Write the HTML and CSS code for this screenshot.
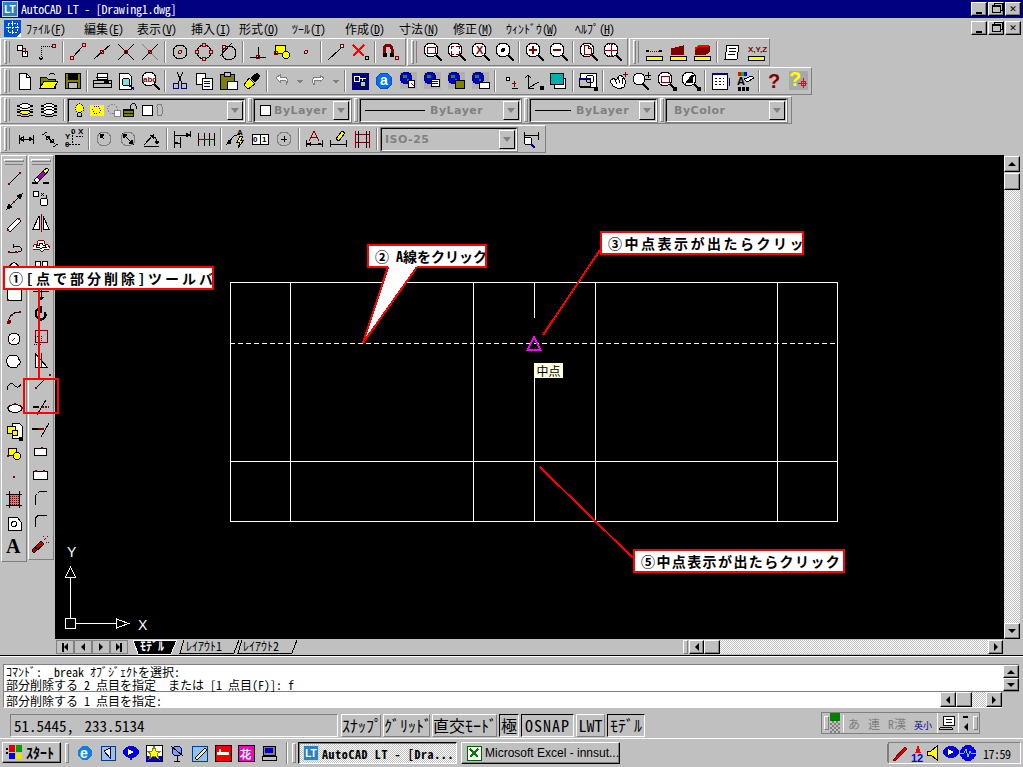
FILE: index.html
```html
<!DOCTYPE html>
<html lang="ja">
<head>
    <meta charset="UTF-8">
    <title>AutoCAD LT - [Drawing1.dwg]</title>
    <link rel="stylesheet" href="styles.css">
</head>
<body>

    <svg class="defs" width="0" height="0">
        <symbol id="mag" viewBox="0 0 24 24"><circle class="w" cx="11" cy="10" r="7"/><path class="b" d="M16 15l6 6"/></symbol>
        <symbol id="ruler" viewBox="0 0 24 24"><rect class="y" x="4" y="16" width="16" height="4"/><path d="M4 20h16"/></symbol>
        <symbol id="earth" viewBox="0 0 24 24"><circle cx="10" cy="9" r="6" fill="#0000c0" stroke="#000080"/><path class="gr" d="M7 6h4v3h-4zM11 10h2v2h-2z"/></symbol>
    </svg>

    <div class="titlebar">
        <span class="app-logo">LT</span>
        <span class="title-text">AutoCAD LT - [Drawing1.dwg]</span>
        <div class="winbtns">
            <span class="winbtn"><i class="min"></i></span>
            <span class="winbtn"><i class="rest"></i></span>
            <span class="winbtn x">&#10005;</span>
        </div>
    </div>

    <div class="menubar">
        <svg class="doc-logo" viewBox="0 0 17 17"><rect width="17" height="17" fill="#0050e0"/><path d="M4 3h9v9h-9zM8 1v13M2 7h13" stroke="#fff" stroke-dasharray="2 1" fill="none"/><path d="M12 17l5-5v5z" fill="#fff"/></svg>
        <div class="menus">
            <span>ﾌｧｲﾙ<b>(<u>F</u>)</b></span>
            <span>編集<b>(<u>E</u>)</b></span>
            <span>表示<b>(<u>V</u>)</b></span>
            <span>挿入<b>(<u>I</u>)</b></span>
            <span>形式<b>(<u>O</u>)</b></span>
            <span>ﾂｰﾙ<b>(<u>T</u>)</b></span>
            <span>作成<b>(<u>D</u>)</b></span>
            <span>寸法<b>(<u>N</u>)</b></span>
            <span>修正<b>(<u>M</u>)</b></span>
            <span>ｳｨﾝﾄﾞｳ<b>(<u>W</u>)</b></span>
            <span>ﾍﾙﾌﾟ<b>(<u>H</u>)</b></span>
        </div>
        <div class="winbtns">
            <span class="winbtn"><i class="min"></i></span>
            <span class="winbtn"><i class="rest"></i></span>
            <span class="winbtn x">&#10005;</span>
        </div>
    </div>

    <!-- object snap / zoom / inquiry -->
    <div class="toolrow">
        <div class="toolbar tb-snap">
            <i class="handle"></i>
            <svg class="i" viewBox="0 0 24 24"><circle class="w" cx="8" cy="8" r="3"/><circle class="w" cx="13" cy="14" r="3"/><path class="m" d="M13 14v-5M11 8h3"/></svg>
            <svg class="i" viewBox="0 0 24 24"><path stroke-dasharray="1 1" d="M5 6h11M5 6v13"/><path d="M3 17l2 3 2-3"/><circle class="m" cx="18" cy="6" r="2"/></svg>
            <i class="sep"></i>
            <svg class="i" viewBox="0 0 24 24"><path d="M7 17L17 6"/><circle class="m" cx="6" cy="18" r="2"/><circle class="m" cx="18" cy="5" r="2"/></svg>
            <svg class="i" viewBox="0 0 24 24"><path d="M4 19L20 5"/><circle class="m" cx="12" cy="12" r="2"/></svg>
            <svg class="i" viewBox="0 0 24 24"><path d="M4 4l16 16M20 4L4 20"/><circle class="m" cx="12" cy="12" r="2"/></svg>
            <svg class="i" viewBox="0 0 24 24"><path class="g" d="M4 4l16 16"/><path d="M20 4L4 20"/><circle class="m" cx="12" cy="12" r="2"/></svg>
            <i class="sep"></i>
            <svg class="i" viewBox="0 0 24 24"><circle cx="12" cy="12" r="7"/><circle class="m" cx="12" cy="12" r="1.5"/></svg>
            <svg class="i" viewBox="0 0 24 24"><circle cx="12" cy="12" r="7"/><circle class="m gb" cx="12" cy="5" r="2"/><circle class="m gb" cx="12" cy="19" r="2"/><circle class="m gb" cx="5" cy="12" r="2"/><circle class="m gb" cx="19" cy="12" r="2"/></svg>
            <svg class="i" viewBox="0 0 24 24"><circle cx="13" cy="13" r="7"/><path d="M4 16L16 3"/><circle class="m gb" cx="8" cy="7" r="2"/></svg>
            <i class="sep"></i>
            <svg class="i" viewBox="0 0 24 24"><path d="M4 17h16M12 7v10"/><circle class="m" cx="12" cy="17" r="2"/></svg>
            <svg class="i" viewBox="0 0 24 24"><rect class="y" x="5" y="5" width="10" height="8"/><circle class="y" cx="16" cy="15" r="3.5"/><circle class="m" cx="6" cy="13" r="2"/></svg>
            <svg class="i" viewBox="0 0 24 24"><circle class="m" cx="12" cy="12" r="1.5"/></svg>
            <i class="sep"></i>
            <svg class="i" viewBox="0 0 24 24"><path d="M4 20L16 9"/><path d="M16 9l2-2"/><circle class="m w" cx="18" cy="6" r="2"/></svg>
            <svg class="i" viewBox="0 0 24 24"><path class="red b" d="M5 5l11 11M16 5L5 16"/><circle cx="19" cy="18" r="2"/></svg>
            <i class="sep"></i>
            <svg class="i" viewBox="0 0 24 24"><path class="m th" d="M6 15V9a4 4 0 0 1 8 0v6"/><path class="k" d="M5 13h3v3h-3zM12 13h3v3h-3z"/><circle class="m" cx="19" cy="18" r="2"/></svg>
        </div>
        <div class="toolbar tb-zoom">
            <i class="handle"></i>
            <svg class="i" viewBox="0 0 24 24"><use href="#mag"/><rect class="m" x="7" y="7" width="8" height="6"/></svg>
            <svg class="i" viewBox="0 0 24 24"><use href="#mag"/><path class="m" d="M7 9V6h3M12 6h3v3M7 11v3h3M15 11v3h-3"/></svg>
            <svg class="i" viewBox="0 0 24 24"><use href="#mag"/><text class="t m-t" x="8" y="14">X</text></svg>
            <svg class="i" viewBox="0 0 24 24"><use href="#mag"/><circle class="k" cx="11" cy="10" r="1.5"/></svg>
            <i class="sep"></i>
            <svg class="i" viewBox="0 0 24 24"><use href="#mag"/><path class="m b" d="M7 10h8M11 6v8"/></svg>
            <svg class="i" viewBox="0 0 24 24"><use href="#mag"/><path class="m b" d="M7 10h8"/></svg>
            <i class="sep"></i>
            <svg class="i" viewBox="0 0 24 24"><use href="#mag"/><path class="m" d="M8 5h4l3 3v6H8zM12 5v3h3"/></svg>
            <svg class="i" viewBox="0 0 24 24"><use href="#mag"/><path class="m" d="M4 10h14M11 3v14M9 5l2-2 2 2M9 15l2 2 2-2"/></svg>
        </div>
        <div class="toolbar tb-inq">
            <i class="handle"></i>
            <svg class="i" viewBox="0 0 24 24"><use href="#ruler"/><path class="m" stroke-dasharray="1 1" d="M6 11h12"/><path class="b" d="M4 11h3M17 11h3"/></svg>
            <svg class="i" viewBox="0 0 24 24"><use href="#ruler"/><path class="mf" d="M5 14v-5l12-3v8z"/></svg>
            <svg class="i" viewBox="0 0 24 24"><use href="#ruler"/><path class="mf" d="M5 14v-5l4-3h10v6l-3 2z" fill="#800000"/><path class="red b" d="M5 9l4-3h10"/></svg>
            <i class="sep"></i>
            <svg class="i" viewBox="0 0 24 24"><path class="w" d="M7 5h12l-2 14H5z"/><path d="M9 8h7M9 11h7M8 14h7"/></svg>
            <svg class="i" viewBox="0 0 24 24"><use href="#ruler"/><text class="t m-t tiny" x="4" y="12">X,Y,Z</text></svg>
        </div>
    </div>

    <!-- standard -->
    <div class="toolrow">
        <div class="toolbar tb-std">
            <i class="handle"></i>
            <svg class="i" viewBox="0 0 24 24"><path class="w" d="M7 4h7l4 4v12H7z"/><path d="M14 4v4h4"/></svg>
            <svg class="i" viewBox="0 0 24 24"><path class="ol" d="M4 8h6l2 2h7v9H4z"/><path class="y" d="M4 19l4-7h14l-4 7z"/><path d="M13 6c2-2 4-2 6 0"/></svg>
            <svg class="i" viewBox="0 0 24 24"><rect class="ol" x="5" y="4" width="15" height="15"/><rect class="k" x="8" y="4" width="9" height="6"/><rect class="gf" x="8" y="13" width="9" height="6"/></svg>
            <i class="sep"></i>
            <svg class="i" viewBox="0 0 24 24"><path class="w" d="M7 4h10v6H7z"/><path class="gf" d="M3 11h18v7H3z"/><path d="M6 8h12M3 14h18"/><rect class="y" x="14" y="12" width="4" height="1"/></svg>
            <svg class="i" viewBox="0 0 24 24"><path class="w" d="M5 4h9l3 3v13H5z"/><circle class="cy" cx="12" cy="13" r="4"/><path class="n b" d="M15 16l5 4"/></svg>
            <svg class="i" viewBox="0 0 24 24"><use href="#mag"/><text class="t m-t tiny" x="5" y="13">abc</text></svg>
            <i class="sep"></i>
            <svg class="i" viewBox="0 0 24 24"><path d="M9 3l5 11M15 3l-5 11"/><circle class="n" cx="8" cy="17" r="3"/><circle class="n" cx="16" cy="17" r="3"/></svg>
            <svg class="i" viewBox="0 0 24 24"><path class="w" d="M4 4h9v11H4z"/><path class="w" d="M10 9h10v11H10z"/><path class="n" d="M12 12h6M12 14h6M12 17h6"/></svg>
            <svg class="i" viewBox="0 0 24 24"><rect class="ol" x="4" y="5" width="14" height="15"/><rect class="gf" x="8" y="3" width="6" height="4"/><path class="w n" d="M11 12h10v8H11z"/></svg>
            <svg class="i" viewBox="0 0 24 24"><path class="y" d="M4 16l5-7 6 6-7 5z"/><path class="k" d="M11 9l6-5 3 3-5 6z"/></svg>
            <i class="sep"></i>
            <svg class="i" viewBox="0 0 24 24"><path class="wg" d="M6 9l4-3v2h6l2 4-2 4v-4c0-1-1-1-2-1h-4v2z"/></svg>
            <svg class="i drop" viewBox="0 0 12 24"><path class="g gfill" d="M3 11h6l-3 3z"/></svg>
            <svg class="i" viewBox="0 0 24 24"><path class="wg" d="M18 9l-4-3v2H8l-2 4 2 4v-4c0-1 1-1 2-1h4v2z"/></svg>
            <svg class="i drop" viewBox="0 0 12 24"><path class="g gfill" d="M3 11h6l-3 3z"/></svg>
            <i class="sep"></i>
            <svg class="i" viewBox="0 0 24 24"><rect x="4" y="4" width="16" height="16" fill="#000080" stroke="#000080"/><path class="wl" d="M6 7h5v5H6zM11 9h7M14 9v6"/><circle class="cy" cx="15" cy="15" r="3"/></svg>
            <svg class="i" viewBox="0 0 24 24"><circle cx="12" cy="12" r="8" fill="#0070f0" stroke="#0050d0"/><text class="t wt big" x="8" y="16">a</text></svg>
            <svg class="i" viewBox="0 0 24 24"><rect class="panel" x="4" y="3" width="17" height="17"/><use href="#earth"/><path class="wf" d="M12 11h6v7h-6z"/><path class="mg" d="M15 14l3 3"/></svg>
            <svg class="i" viewBox="0 0 24 24"><rect class="panel" x="4" y="3" width="17" height="17"/><use href="#earth"/><path class="wf" d="M11 10h8v7h-8z"/><path class="n" d="M12 12h6M12 14h6"/></svg>
            <svg class="i" viewBox="0 0 24 24"><rect class="panel" x="4" y="3" width="17" height="17"/><use href="#earth"/><rect class="ol" x="11" y="11" width="9" height="8"/></svg>
            <svg class="i" viewBox="0 0 24 24"><rect class="panel" x="4" y="3" width="17" height="17"/><use href="#earth"/><rect class="wf" x="11" y="13" width="10" height="6"/></svg>
            <i class="sep"></i>
            <svg class="i" viewBox="0 0 24 24"><circle class="w" cx="10" cy="10" r="2"/><path class="m" d="M14 14h4M16 12v6"/><path d="M14 20l6-1"/></svg>
            <svg class="i" viewBox="0 0 24 24"><path d="M6 6v13l11-6M6 19h6M3 9l3-3 3 3"/><path class="k" d="M18 17h3v3h-3z"/></svg>
            <svg class="i" viewBox="0 0 24 24"><rect class="w" x="8" y="9" width="11" height="10"/><rect x="4" y="4" width="13" height="11" fill="#00b0b0" stroke="#000"/></svg>
            <i class="sep"></i>
            <svg class="i" viewBox="0 0 24 24"><rect class="w" x="4" y="4" width="16" height="14"/><rect class="gf" x="3" y="9" width="11" height="8"/><path class="n b" d="M3 10h11"/><circle cx="14" cy="10" r="4"/><path class="k" d="M18 18h3v3h-3z"/></svg>
            <i class="sep"></i>
            <svg class="i" viewBox="0 0 24 24"><path class="w" d="M4 12l4-3 2 2 4-5 3 2 3 4-2 6-5 2-6-3z"/><path d="M8 9l3 6M12 8l2 6M16 9l1 6"/><path class="m" d="M17 5h5M19 3v5"/></svg>
            <svg class="i" viewBox="0 0 24 24"><circle class="w" cx="9" cy="10" r="6"/><path class="b" d="M13 15l6 6"/><path d="M15 6h6M18 3v6M15 10h6"/></svg>
            <svg class="i" viewBox="0 0 24 24"><use href="#mag"/><rect class="m" x="7" y="7" width="8" height="6"/><path class="k" d="M19 18h3v3h-3z"/></svg>
            <svg class="i" viewBox="0 0 24 24"><use href="#mag"/><path class="k" d="M8 14L14 6h2l-2 4 1 3z"/><path class="k" d="M19 18h3v3h-3z"/></svg>
            <i class="sep"></i>
            <svg class="i" viewBox="0 0 24 24"><rect class="w" x="4" y="4" width="15" height="16"/><path class="n b" d="M4 5h15"/><path class="n" stroke-dasharray="2 2" d="M7 9h9M7 12h9M7 15h9"/><path class="n" d="M21 9v8"/></svg>
            <svg class="i" viewBox="0 0 24 24"><rect x="6" y="3" width="3" height="4" fill="#f00" stroke="none"/><rect x="9" y="3" width="3" height="4" fill="#00c000" stroke="none"/><rect x="12" y="3" width="3" height="4" fill="#00f" stroke="none"/><text class="t" x="5" y="16">A</text><path class="w" d="M12 10l8-3 2 2-7 4z"/><path class="k" d="M6 18h2v3h-2zM10 18h2v3h-2zM14 18h2v3h-2z"/></svg>
            <i class="sep"></i>
            <svg class="i" viewBox="0 0 24 24"><text class="t m-t huge" x="6" y="19">?</text></svg>
            <svg class="i" viewBox="0 0 24 24"><rect class="panel2" x="3" y="2" width="19" height="19"/><text class="t y-t huge" x="3" y="17">?</text><path class="red" d="M12 14h9M17 9v10"/><rect class="red" x="15" y="12" width="4" height="4"/></svg>
        </div>
    </div>

    <!-- layers and properties -->
    <div class="toolrow">
        <div class="toolbar tb-layers">
            <i class="handle"></i>
            <svg class="i" viewBox="0 0 24 24"><path class="w" d="M4 8l8-3 8 3-8 3z"/><path class="w" d="M4 11l8 3 8-3"/><path class="y" d="M4 14l8 3 8-3-8-2z"/><path d="M4 17l8 2 8-2"/></svg>
            <svg class="i" viewBox="0 0 24 24"><path class="w" d="M4 8l8-3 8 3-8 3z"/><path class="w" d="M4 11l8 3 8-3-8-3z"/><path class="w" d="M4 14l8 3 8-3-8-3z"/><path d="M4 17l8 2 8-2"/></svg>
            <i class="sep sm"></i>
            <div class="combo c-layer">
                <svg class="lay" viewBox="0 0 17 17"><circle class="y" cx="8" cy="6" r="4.5" stroke-dasharray="1 1"/><path d="M6 11h4v4H6z"/></svg>
                <svg class="lay" viewBox="0 0 17 17"><rect class="y" x="2" y="3" width="13" height="11" stroke="#ff0"/><circle cx="8" cy="8" r="4" stroke-dasharray="1 1"/></svg>
                <svg class="lay" viewBox="0 0 17 17"><circle class="g" cx="7" cy="7" r="5" stroke-dasharray="2 1"/><rect class="g w" x="9" y="9" width="6" height="6"/></svg>
                <svg class="lay" viewBox="0 0 17 17"><rect x="1" y="7" width="10" height="8" fill="#808000"/><path d="M1 9h10M1 12h10"/><path d="M8 7V4a3 3 0 0 1 6 0v3"/></svg>
                <span class="swatch"></span>
                <svg class="lay thin" viewBox="0 0 8 17"><rect class="g" x="1" y="2" width="5" height="12" rx="2.5"/></svg>
                <span class="combo-arrow"></span>
            </div>
            <i class="handle thin"></i>
            <div class="combo c-color"><span class="swatch"></span><span class="combo-text">ByLayer</span><span class="combo-arrow"></span></div>
            <i class="handle thin"></i>
            <div class="combo c-ltype"><span class="ltline"></span><span class="combo-text">ByLayer</span><span class="combo-arrow"></span></div>
            <i class="handle thin"></i>
            <div class="combo c-lweight"><span class="ltline short"></span><span class="combo-text">ByLayer</span><span class="combo-arrow"></span></div>
            <i class="handle thin"></i>
            <div class="combo c-plot"><span class="combo-text">ByColor</span><span class="combo-arrow"></span></div>
        </div>
    </div>

    <!-- dimension -->
    <div class="toolrow">
        <div class="toolbar tb-dim">
            <i class="handle"></i>
            <svg class="i" viewBox="0 0 24 24"><path d="M5 8v9M19 8v9M5 12h14M6 12l3-2v4zM18 12l-3-2v4z"/></svg>
            <svg class="i" viewBox="0 0 24 24"><path d="M4 8l5-3M15 20l5-3M7 8l10 9M8 9l1 4 3-3zM16 16l-1-4-3 3z"/></svg>
            <svg class="i" viewBox="0 0 24 24"><path stroke-dasharray="2 1" d="M10 5v12M14 9h7M4 17h14"/><text class="t tiny" x="3" y="12">Y</text><text class="t tiny" x="3" y="20">0</text><text class="t tiny" x="9" y="7">0</text><text class="t tiny" x="16" y="7">X</text></svg>
            <i class="sep"></i>
            <svg class="i" viewBox="0 0 24 24"><circle class="g" cx="12" cy="12" r="7"/><path class="k" d="M8 7l4 1-3 3z"/><path d="M9 9l3 3"/></svg>
            <svg class="i" viewBox="0 0 24 24"><circle class="g" cx="12" cy="12" r="7"/><path d="M8 8l8 8"/><path class="k" d="M7 7l4 1-3 3zM17 17l-4-1 3-3z"/></svg>
            <svg class="i" viewBox="0 0 24 24"><path d="M4 19h15M4 18L14 7M10 8a8 8 0 0 1 7 9"/><path class="k" d="M10 8l3 0 0 3zM15 14h4l-2 3z"/></svg>
            <i class="sep"></i>
            <svg class="i" viewBox="0 0 24 24"><path d="M4 4v17M10 10v11M20 4v6M4 8h16M4 16h6"/><path class="k" d="M16 6l4 2-4 2zM5 15l3 1-3 1z"/></svg>
            <svg class="i" viewBox="0 0 24 24"><path d="M4 6v13M10 6v13M15 6v13M20 6v13"/><path class="m" d="M4 12h16"/></svg>
            <i class="sep"></i>
            <svg class="i" viewBox="0 0 24 24"><path d="M4 16l6-7 6-2"/><path class="k" d="M3 17l2-4 2 3z"/><path class="y" d="M16 9l-3 6h3l-2 6 6-8h-3l2-4z"/><text class="t tiny" x="13" y="8">A</text></svg>
            <svg class="i" viewBox="0 0 24 24"><rect class="w" x="4" y="7" width="16" height="10"/><path d="M12 7v10"/><text class="t tiny" x="5" y="15">0</text><text class="t tiny" x="14" y="15">1</text></svg>
            <svg class="i" viewBox="0 0 24 24"><circle class="g" cx="12" cy="12" r="7"/><path d="M9 12h6M12 9v6"/></svg>
            <i class="sep"></i>
            <svg class="i" viewBox="0 0 24 24"><path class="m" d="M12 4l-5 10M12 4l5 10M9 10h6"/><path d="M4 13v7M20 13v7M4 17h16"/><path class="k" d="M5 17l3-1v2zM19 17l-3-1v2z"/></svg>
            <svg class="i" viewBox="0 0 24 24"><path d="M4 13v7M20 13v7M4 17h16"/><path class="y" d="M10 12l6-8 3 2-6 8z"/></svg>
            <svg class="i" viewBox="0 0 24 24"><path class="m" d="M5 4v17M19 4v17M5 7h14M5 15h14"/><path d="M8 4v17M16 4v17"/></svg>
            <i class="sep"></i>
            <div class="combo c-dim"><span class="combo-text">ISO-25</span><span class="combo-arrow"></span></div>
            <svg class="i" viewBox="0 0 24 24"><path d="M6 5v8M20 5v8M6 8h14"/><circle class="w" cx="10" cy="14" r="4"/><path class="n b" d="M13 17l4 4"/></svg>
        </div>
    </div>

    <div class="work">
        <div class="side">
            <div class="vtool vt-draw">
                <i class="vhandle"></i>
                <svg class="i" viewBox="0 0 24 23"><path d="M7 17L17 7"/><circle class="mf" cx="7" cy="17" r="1"/><circle class="mf" cx="18" cy="6" r="1"/></svg>
                <svg class="i" viewBox="0 0 24 23"><path d="M5 19L20 4"/><path class="k" d="M5 19l2-5 3 3zM20 4l-2 5-3-3z"/><circle class="mf" cx="12" cy="12" r="1"/></svg>
                <svg class="i" viewBox="0 0 24 23"><path class="w" d="M5 16L16 5l3 3L8 19z"/><circle class="mf" cx="6" cy="17" r="1"/><circle class="mf" cx="17" cy="6" r="1"/></svg>
                <svg class="i" viewBox="0 0 24 23"><path d="M6 16h10c3 0 4-2 3-4-1-2-3-2-7-2"/><path d="M12 8l-1 2 1 2"/><circle class="mf" cx="7" cy="16" r="1"/><circle class="mf" cx="14" cy="16" r="1"/></svg>
                <svg class="i" viewBox="0 0 24 23"><path class="w" d="M12 3l7 6v9H5V9z"/></svg>
                <svg class="i" viewBox="0 0 24 23"><rect class="w" x="5" y="6" width="14" height="12"/><circle class="mf" cx="6" cy="18" r="1"/></svg>
                <svg class="i" viewBox="0 0 24 23"><path d="M6 17c1-6 5-10 12-10"/><circle class="mf" cx="7" cy="17" r="1.5"/><circle class="mf" cx="10" cy="10" r="1"/><circle class="mf" cx="18" cy="7" r="1"/></svg>
                <svg class="i" viewBox="0 0 24 23"><circle class="w" cx="12" cy="11" r="6"/><path class="m" d="M10 13l3-3"/></svg>
                <svg class="i" viewBox="0 0 24 23"><path class="w" d="M5 8c0-3 4-4 6-3 2-2 6 0 5 3 3 1 3 5 0 6 0 3-4 3-5 2-3 1-6-1-5-3-2-1-2-4-1-5z"/></svg>
                <svg class="i" viewBox="0 0 24 23"><path d="M5 16c1-6 4-8 7-5s5 3 7-1"/></svg>
                <svg class="i" viewBox="0 0 24 23"><ellipse class="w" cx="13" cy="11.500" rx="7" ry="4"/><circle class="mf" cx="13" cy="7" r="1"/><circle class="mf" cx="6" cy="11" r="1"/><circle class="mf" cx="20" cy="11" r="1"/></svg>
                <svg class="i" viewBox="0 0 24 23"><path class="w" d="M10 3h7l3 3v12H10z"/><rect class="y" x="5" y="6" width="8" height="7"/><circle class="y" cx="13" cy="13" r="3"/><path class="k" d="M17 17h3v3h-3z"/></svg>
                <svg class="i" viewBox="0 0 24 23"><rect class="y" x="6" y="5" width="8" height="7"/><circle class="y" cx="15" cy="13" r="3.500"/><circle class="mf" cx="6" cy="13" r="1"/></svg>
                <svg class="i" viewBox="0 0 24 23"><circle class="mf" cx="12" cy="11" r="1"/></svg>
                <svg class="i" viewBox="0 0 24 23"><rect x="7" y="5" width="10" height="11" fill="#c08080"/><path class="m" stroke-dasharray="1 1" d="M8 7h9M8 9h9M8 11h9M8 13h9M8 15h9"/><path d="M4 5h16M4 16h16M7 2v17M17 2v17"/></svg>
                <svg class="i" viewBox="0 0 24 23"><path class="w" d="M6 5h9l4 5v8H6z"/><circle cx="12" cy="12" r="2.500"/></svg>
                <svg class="i" viewBox="0 0 24 23"><text class="t serif" x="4" y="18">A</text></svg>
            </div>
            <div class="vtool vt-modify">
                <i class="vhandle"></i>
                <svg class="i" viewBox="0 0 24 23"><path class="y" d="M14 6l4-3 2 2-3 4z"/><path d="M8 12l6-6 3 3-6 6z" fill="#a000a0"/><path class="w" d="M5 15l3-3 3 3-2 2H7z"/><path class="b" d="M3 18h6M14 18h6"/></svg>
                <svg class="i" viewBox="0 0 24 23"><circle class="w" cx="7" cy="6" r="3"/><circle class="w" cx="15" cy="14" r="4"/><path d="M12 5l3 3M15 5l-3 3M17 7v3"/></svg>
                <svg class="i" viewBox="0 0 24 23"><path class="w" d="M10 5v13H4zM14 5v13h6z"/><path class="m" d="M12 3v18"/></svg>
                <svg class="i" viewBox="0 0 24 23"><path class="w m" d="M4 15c-1-4 3-5 4-5 0-3 2-4 4-4s4 1 4 4c2 0 5 1 4 5h-4l-3 3-3-3z"/><path class="w" d="M7 13c0-1 1-2 3-2 0-1 1-2 2-2s2 1 2 2c2 0 3 1 3 2h-3l-2 2-2-2z"/></svg>
                <svg class="i" viewBox="0 0 24 23"><path class="w" d="M6 4h5v5H6zM13 4h5v5h-5zM6 11h5v5H6zM13 11h5v5h-5z"/></svg>
                <svg class="i" viewBox="0 0 24 23"><path d="M12 3v17M4 11h16"/><path class="k" d="M9 5l3-3 3 3zM9 17l3 3 3-3z"/></svg>
                <svg class="i" viewBox="0 0 24 23"><path class="b" d="M9 6c-3 2-3 8 1 10s8-2 6-7"/><path class="b" d="M12 3v7"/></svg>
                <svg class="i" viewBox="0 0 24 23"><rect class="m" x="6" y="4" width="12" height="12"/><rect x="6" y="10" width="6" height="6" stroke-dasharray="1 1"/><path stroke-dasharray="1 1" d="M5 18h8"/></svg>
                <svg class="i" viewBox="0 0 24 23"><path class="w" d="M6 4v14h12z"/><path class="m" d="M12 4v14"/></svg>
                <svg class="i" viewBox="0 0 24 23"><path d="M8 15l8-8"/><circle class="mf" cx="7" cy="16" r="1"/><circle class="mf" cx="21" cy="3" r="1"/></svg>
                <svg class="i" viewBox="0 0 24 23"><path class="b" d="M4 12h6"/><path d="M8 20l9-15"/><path class="m b" stroke-dasharray="2 1" d="M13 12h7"/></svg>
                <svg class="i" viewBox="0 0 24 23"><path class="b" d="M3 11h6"/><path class="m b" d="M9 11h6"/><path d="M12 19l8-14"/></svg>
                <svg class="i" viewBox="0 0 24 23"><rect class="w" x="5" y="7" width="12" height="7"/><circle class="m" cx="13" cy="7" r="1"/></svg>
                <svg class="i" viewBox="0 0 24 23"><rect class="w" x="4" y="7" width="14" height="8"/><circle class="mf" cx="7" cy="7" r="1"/><circle class="mf" cx="15" cy="7" r="1"/></svg>
                <svg class="i" viewBox="0 0 24 23"><path stroke-dasharray="1 1" d="M6 9l5-5"/><path d="M6 18V9M11 4h7"/></svg>
                <svg class="i" viewBox="0 0 24 23"><path d="M6 17v-7c0-3 3-5 6-5h6"/></svg>
                <svg class="i" viewBox="0 0 24 23"><path d="M4 19l-1-2 9-9 3 3-9 8z" fill="#c00000"/><circle class="w" cx="7" cy="15" r="1"/><path class="m" stroke-dasharray="1 1" d="M15 7l4-4M17 9h4M14 4V2"/></svg>
            </div>
        </div>

        <div class="view">
            <div class="view-top">
                <div class="canvas">
                    <svg class="drawing" viewBox="55 155 949 484">
                        <g class="white">
                            <path d="M230 282.500h607M230 461.500h607M230 521.500h607"/>
                            <path d="M230.500 282v240M290.500 282v240M473.500 282v240M595.500 282v240M777.500 282v240M837.500 282v240"/>
                            <path d="M534.500 282v36M534.500 378v143"/>
                            <path stroke-dasharray="5 3" d="M230 343.500h607"/>
                        </g>
                        <path class="marker" d="M534 337l-6.500 13h13z"/>
                        <g class="white">
                            <rect x="65.500" y="618.500" width="10" height="10"/>
                            <path d="M70.500 618V577M65.500 577l5-10 5 10zM75 623.500h41M116.500 619l12 4.500-12 4.500z"/>
                        </g>
                        <text class="axis" x="67" y="557">Y</text>
                        <text class="axis" x="138" y="630">X</text>
                    </svg>
                    <span class="tip">中点</span>
                </div>
                <div class="vscroll">
                    <span class="sb-btn"><i class="ar up"></i></span>
                    <span class="sb-thumb"></span>
                    <span class="sb-track"></span>
                    <span class="sb-btn"><i class="ar down"></i></span>
                </div>
            </div>
            <div class="tabrow">
                <div class="navs">
                    <span class="nav"><i class="bar"></i><i class="ar left"></i></span>
                    <span class="nav"><i class="ar left"></i></span>
                    <span class="nav"><i class="ar right"></i></span>
                    <span class="nav"><i class="ar right"></i><i class="bar"></i></span>
                </div>
                <svg class="tabs" viewBox="0 0 170 16">
                    <path class="tab" d="M51 0l-4 13h54l5-13"/>
                    <path class="tab" d="M109 0l-4 13h54l5-13"/>
                    <path class="tab-on" d="M0 0h44l-6 14H5z"/>
                    <text class="tab-label on" x="7" y="11">ﾓﾃﾞﾙ</text>
                    <text class="tab-label" x="53" y="11">ﾚｲｱｳﾄ1</text>
                    <text class="tab-label" x="110" y="11">ﾚｲｱｳﾄ2</text>
                </svg>
                <div class="hscroll">
                    <i class="vgrip"></i>
                    <span class="sb-btn"><i class="ar left"></i></span>
                    <span class="sb-thumb"></span>
                    <span class="sb-track"></span>
                    <span class="sb-btn"><i class="ar right"></i></span>
                </div>
            </div>
        </div>
    </div>

    <div class="split"></div>

    <div class="cmd">
        <div class="cmd-hist">
            <pre>ｺﾏﾝﾄﾞ: _break ｵﾌﾞｼﾞｪｸﾄを選択:
部分削除する 2 点目を指定  または [1 点目(F)]: f</pre>
            <div class="cmd-vs">
                <span class="sb-btn"><i class="ar up"></i></span>
                <span class="sb-btn"><i class="ar down"></i></span>
            </div>
        </div>
        <div class="cmd-line">
            <pre>部分削除する 1 点目を指定:</pre>
            <div class="cmd-hs">
                <span class="sb-btn"><i class="ar left"></i></span>
                <span class="sb-thumb"></span>
                <span class="sb-track"></span>
                <span class="sb-btn"><i class="ar right"></i></span>
            </div>
        </div>
    </div>

    <div class="status">
        <div class="coords">51.5445, 233.5134</div>
        <span class="st st-snap">ｽﾅｯﾌﾟ</span>
        <span class="st st-grid">ｸﾞﾘｯﾄﾞ</span>
        <span class="st st-ortho">直交ﾓｰﾄﾞ</span>
        <span class="st st-polar on">極</span>
        <span class="st st-osnap on">OSNAP</span>
        <span class="st st-lwt">LWT</span>
        <span class="st st-model on">ﾓﾃﾞﾙ</span>
        <div class="ime">
            <i class="vgrip"></i>
            <span class="ime-led"><i></i></span>
            <span class="ime-text">あ 連 R漢 <b>英小</b></span>
            <svg class="ime-ico" viewBox="0 0 20 20"><rect class="w" x="6" y="3" width="11" height="10"/><path d="M8 6h7M8 9h7M2 15h13v2H2z"/></svg>
            <span class="ime-arrows"><i class="dash"></i><i class="ar left"></i></span>
            <i class="vgrip"></i>
        </div>
    </div>

    <div class="taskbar">
        <span class="start">
            <svg class="flag" viewBox="0 0 16 14"><path d="M0 3h2v2H0zM0 7h2v2H0z" fill="#000"/><path d="M3 1h5v6H3z" fill="#e00000"/><path d="M9 1h5v6H9z" fill="#00a000"/><path d="M3 8h5v5H3z" fill="#0000e0"/><path d="M9 8h5v5H9z" fill="#f0e000"/></svg>
            <b>ｽﾀｰﾄ</b>
        </span>
        <i class="vgrip"></i>
        <div class="quick">
            <svg viewBox="0 0 18 18"><circle cx="9" cy="9" r="7" fill="#1080e0"/><text class="t wt big" x="4" y="14">e</text></svg>
            <svg viewBox="0 0 18 18"><rect x="2" y="2" width="14" height="14" fill="#a0c0e0" stroke="#004080"/><path d="M5 7l6-3v10z" fill="#fff" stroke="#000080"/></svg>
            <svg viewBox="0 0 18 18"><ellipse cx="9" cy="8" rx="8" ry="6" fill="#0000e0"/><path d="M6 5l6 3-6 3z" fill="#fff"/><path d="M7 13l2 4 2-4z" fill="#0000e0"/></svg>
            <svg viewBox="0 0 18 18"><rect x="1" y="1" width="16" height="16" fill="#fff" stroke="#000"/><path d="M1 12h16v5H1z" fill="#0000c0"/><path d="M9 2l2 5h5l-4 3 2 5-5-3-5 3 2-5-4-3h5z" fill="#ff0" stroke="#808000"/></svg>
            <svg viewBox="0 0 18 18"><circle cx="9" cy="7" r="5" fill="#80a0e0" stroke="#000080"/><path d="M3 2l12 10M6 17h6M9 12v5" stroke="#000" fill="none"/></svg>
            <svg viewBox="0 0 18 18"><rect x="1" y="2" width="15" height="15" fill="#90c0f0" stroke="#004080"/><path d="M4 14l10-10 2 2-10 10z" fill="#f0f0c0" stroke="#000"/></svg>
            <svg viewBox="0 0 18 18"><rect x="1" y="1" width="16" height="16" fill="#f00000" stroke="#000"/><path d="M3 8h12v3H3z" fill="#fff"/><path d="M5 5h2v3H5z" fill="#fff"/></svg>
            <svg viewBox="0 0 18 18"><rect x="1" y="1" width="16" height="16" fill="#f000c0" stroke="#000"/><text class="t wt" x="3" y="14">花</text></svg>
            <svg viewBox="0 0 18 18"><rect x="3" y="2" width="12" height="9" fill="#808080" stroke="#000"/><rect x="5" y="4" width="8" height="5" fill="#0000c0"/><rect x="2" y="12" width="14" height="4" fill="#c0c0c0" stroke="#000"/></svg>
        </div>
        <i class="tsep"></i>
        <i class="vgrip"></i>
        <span class="task active"><span class="app-logo small">LT</span><b>AutoCAD LT - [Dra...</b></span>
        <span class="task"><svg class="xl" viewBox="0 0 16 16"><rect x="1" y="1" width="14" height="14" fill="#fff" stroke="#006000"/><path d="M4 4l8 8M12 4l-8 8" stroke="#008000" stroke-width="2"/></svg><span class="task-name">Microsoft Excel - innsut...</span></span>
        <div class="tray">
            <svg viewBox="0 0 18 18"><path d="M2 16L14 3l2 2L4 17z" fill="#e00000" stroke="#800000"/></svg>
            <svg viewBox="0 0 18 18"><path d="M7 9l3-8 3 8z" fill="#f00"/><text class="t blue-t" x="3" y="18">12</text></svg>
            <svg viewBox="0 0 18 18"><path d="M2 7h4l6-5v14l-6-5H2z" fill="#ff0" stroke="#000"/></svg>
            <svg viewBox="0 0 18 18"><ellipse cx="9" cy="8" rx="8" ry="6" fill="#0000e0"/><path d="M6 5l6 3-6 3z" fill="#fff"/></svg>
            <svg viewBox="0 0 18 18"><circle cx="9" cy="9" r="8" fill="#0000e0"/><path d="M1 9h4l2-4 2 8 2-6 1 2h5" stroke="#80c0ff" fill="none"/></svg>
            <span class="clock">17:59</span>
        </div>
    </div>

    <!-- hand drawn notes on top of the screenshot -->
    <div class="note note-1">&#9312;[点で部分削除]ツールバー</div>
    <div class="note note-2">&#9313; A線をクリック</div>
    <div class="note note-3">&#9314;中点表示が出たらクリック</div>
    <div class="note note-5">&#9316;中点表示が出たらクリック</div>
    <div class="redbox"></div>
    <svg class="arrows" viewBox="0 0 1023 767">
        <path class="wedge-fill" d="M388 266l-25 77 54-77z"/>
        <path class="redline" d="M388 267l-25 76 54-76"/>
        <path class="redline" d="M600 250l-57 85"/>
        <path class="redline" d="M540 467l93 91"/>
        <path class="redline" d="M39 290v88"/>
    </svg>

</body>
</html>
```

FILE: styles.css
```css
* {
    margin: 0;
    padding: 0;
    box-sizing: border-box;
}

body {
    position: relative;
    width: 1023px;
    height: 767px;
    overflow: hidden;
    background-color: #c0c0c0;
    font-family: "Noto Sans CJK JP", sans-serif;
    font-size: 12px;
    font-feature-settings: "hwid";
    color: #000;
}

.defs {
    position: absolute;
}

/* title bar and menu */
.titlebar {
    display: flex;
    align-items: center;
    height: 18px;
    background-color: #000080;
    color: #fff;
    padding-left: 2px;
}

.app-logo {
    display: flex;
    align-items: center;
    justify-content: center;
    width: 16px;
    height: 16px;
    background-color: #3080c0;
    border: 1px solid #c0e0e0;
    color: #fff;
    font-family: "Liberation Sans", sans-serif;
    font-size: 10px;
    font-weight: bold;
}

.title-text {
    margin-left: 3px;
    line-height: 18px;
    letter-spacing: -0.25px;
}

.winbtns {
    display: flex;
    margin-left: auto;
    margin-right: 2px;
    gap: 1px;
}

.winbtn {
    display: flex;
    align-items: center;
    justify-content: center;
    width: 16px;
    height: 14px;
    background-color: #c0c0c0;
    border: 1px solid;
    border-color: #fff #000 #000 #fff;
    box-shadow: inset -1px -1px #808080;
    color: #000;
    font-size: 9px;
    line-height: 1;
}

.winbtn.x {
    font-family: "DejaVu Sans", sans-serif;
    font-weight: bold;
}

.min {
    display: block;
    width: 6px;
    height: 2px;
    margin-top: 7px;
    background-color: #000;
}

.rest {
    display: block;
    width: 9px;
    height: 8px;
    border: 1px solid #000;
    border-top-width: 2px;
    box-shadow: 2px -2px 0 -1px #c0c0c0, 2px -2px 0 0 #000;
}

.menubar {
    display: flex;
    align-items: center;
    height: 20px;
}

.doc-logo {
    width: 17px;
    height: 17px;
    margin-left: 4px;
}

.menus {
    display: grid;
    grid-template-columns: 58px 53px 54px 48px 53px 53px 54px 54px 53px 69px 60px;
    margin-left: 5px;
    white-space: nowrap;
}

.menus b {
    font-weight: normal;
    letter-spacing: -1px;
}

/* toolbars */
.toolrow {
    display: flex;
    height: 28px;
    margin-bottom: 1px;
    gap: 1px;
}

.toolbar {
    position: relative;
    display: flex;
    align-items: center;
    height: 28px;
    padding-left: 12px;
    border: 1px solid;
    border-color: #fff #808080 #808080 #fff;
}

.handle {
    position: absolute;
    left: 3px;
    top: 1px;
    width: 3px;
    height: 24px;
    border: 1px solid;
    border-color: #fff #808080 #808080 #fff;
    box-shadow: 4px 0 0 -1px #808080;
}

.handle.thin {
    position: static;
    flex: none;
    width: 4px;
    margin: 0 1px 0 2px;
    box-shadow: none;
}

.tb-snap { width: 406px; padding-left: 11px; }
.tb-zoom { width: 221px; }
.tb-inq { width: 141px; }
.tb-std { width: 812px; padding-left: 11px; }
.tb-layers { width: 792px; }
.tb-dim { width: 546px; padding-left: 13px; }

svg.i {
    flex: none;
    width: 24px;
    height: 24px;
    fill: none;
    stroke: #000;
    shape-rendering: crispEdges;
}

svg.i.drop {
    width: 12px;
}

svg {
    shape-rendering: crispEdges;
}

.lay, .ime-ico {
    fill: none;
    stroke: #000;
}

.sep {
    flex: none;
    width: 2px;
    height: 22px;
    margin: 0 2px;
    border-left: 1px solid #808080;
    border-right: 1px solid #fff;
}

.sep.sm {
    margin: 0 1px 0 2px;
}

/* icon colours */
.w { fill: #fff; }
.y { fill: #ff0; }
.k { fill: #000; }
.m { stroke: #800000; }
.g { stroke: #808080; }
.n { stroke: #000080; }
.b { stroke-width: 2; }
.th { stroke-width: 3; }
.mf { fill: #800000; stroke: #800000; }
.red { stroke: #f00; }
.gb { fill: #c0c0c0; }
.ol { fill: #808000; }
.gf { fill: #c0c0c0; }
.cy { fill: #80e0e0; }
.gr { fill: #00a000; stroke: none; }
.wf { fill: #fff; }
.wl { stroke: #fff; }
.mg { stroke: #800080; }
.panel { fill: #b0b0b0; stroke: none; }
.panel2 { fill: #a8a8a8; stroke: none; }
.wg { fill: #fff; stroke: #808080; }
.gfill { fill: #808080; }

.t {
    font-family: "Liberation Sans", sans-serif;
    font-size: 11px;
    font-weight: bold;
    stroke: none;
    fill: #000;
}

.m-t { fill: #800000; }
.wt { fill: #fff; }
.y-t { fill: #ff0; }
.blue-t { fill: #0000e0; }
.tiny { font-size: 8px; }
.big { font-size: 14px; }
.huge { font-size: 20px; }
.serif {
    font-family: "Liberation Serif", serif;
    font-size: 20px;
}

/* combo boxes */
.combo {
    position: relative;
    display: flex;
    flex: none;
    align-items: center;
    height: 25px;
    border: 2px solid;
    border-color: #000 #fff #fff #000;
    outline: 1px solid #808080;
    outline-offset: -1px;
    padding-left: 3px;
    gap: 2px;
}

.c-layer { width: 179px; margin-left: 1px; gap: 1px; }
.c-color { width: 99px; gap: 1px; }
.c-ltype { width: 163px; }
.c-lweight { width: 129px; }
.c-plot { width: 123px; padding-left: 7px; }
.c-dim { width: 138px; }

.lay {
    width: 16px;
    height: 17px;
}

.lay.thin {
    width: 8px;
}

.swatch {
    width: 11px;
    height: 11px;
    margin: 0 2px;
    background-color: #fff;
    border: 1px solid #000;
}

.ltline {
    width: 60px;
    height: 1px;
    background-color: #000;
    margin: 0 3px 0 1px;
}

.ltline.short {
    width: 36px;
}

.combo-text {
    font-family: "DejaVu Sans", sans-serif;
    font-size: 11px;
    font-weight: bold;
    letter-spacing: 0.5px;
    color: #808080;
}

.combo-arrow {
    position: absolute;
    top: 1px;
    right: 1px;
    width: 16px;
    height: 19px;
    background-color: #c0c0c0;
    border: 1px solid;
    border-color: #fff #000 #000 #fff;
}

.combo-arrow::after {
    content: "";
    position: absolute;
    left: 3px;
    top: 6px;
    border: 4px solid transparent;
    border-top: 5px solid #808080;
    border-bottom: 0;
}

/* drawing area */
.work {
    display: flex;
    height: 501px;
    margin-top: 2px;
}

.side {
    display: flex;
    align-items: flex-start;
    width: 55px;
    padding-left: 1px;
    gap: 1px;
}

.vtool {
    display: flex;
    flex-direction: column;
    width: 26px;
    border: 1px solid;
    border-color: #fff #808080 #808080 #fff;
}

.vt-draw { height: 407px; }
.vt-modify { height: 405px; }

.vtool svg.i {
    height: 23px;
}

.vhandle {
    flex: none;
    display: block;
    height: 3px;
    margin: 3px 2px 0;
    border: 1px solid;
    border-color: #fff #808080 #808080 #fff;
    box-shadow: 0 4px 0 -1px #808080;
}

.vt-draw .vhandle { margin-bottom: 5px; }
.vt-modify .vhandle { margin-bottom: 3px; }

.view {
    display: flex;
    flex-direction: column;
    width: 965px;
}

.view-top {
    display: flex;
    height: 484px;
}

.canvas {
    position: relative;
    width: 949px;
    background-color: #000;
}

.drawing {
    display: block;
    width: 949px;
    height: 484px;
}

.white {
    fill: none;
    stroke: #fff;
}

.marker {
    fill: none;
    stroke: #f0f;
    stroke-width: 2;
}

.axis {
    font-family: "Liberation Sans", sans-serif;
    font-size: 14px;
    fill: #fff;
}

.tip {
    position: absolute;
    left: 479px;
    top: 208px;
    width: 29px;
    height: 15px;
    background-color: #ffffe1;
    color: #000;
    line-height: 15px;
    text-align: center;
}

/* scroll bars */
.vscroll {
    display: flex;
    flex-direction: column;
    width: 16px;
    padding-top: 1px;
}

.sb-btn {
    position: relative;
    flex: none;
    display: flex;
    align-items: center;
    justify-content: center;
    width: 15px;
    height: 15px;
    background-color: #c0c0c0;
    border: 1px solid;
    border-color: #fff #000 #000 #fff;
    box-shadow: inset -1px -1px #808080;
}

.vscroll .sb-btn { width: 16px; height: 16px; }

.sb-thumb {
    flex: none;
    display: block;
    width: 16px;
    height: 16px;
    background-color: #c0c0c0;
    border: 1px solid;
    border-color: #fff #000 #000 #fff;
    box-shadow: inset -1px -1px #808080;
}

.vscroll .sb-thumb { height: 17px; margin-top: 1px; }

.sb-track {
    flex: 1;
    background: repeating-conic-gradient(#fff 0 25%, #c0c0c0 0 50%) 0 0 / 2px 2px;
}

.ar {
    display: block;
    width: 0;
    height: 0;
    border: 4px solid transparent;
}

.ar.up { border-top: 0; border-bottom-color: #000; }
.ar.down { border-bottom: 0; border-top-color: #000; }
.ar.left { border-left: 0; border-right-color: #000; }
.ar.right { border-right: 0; border-left-color: #000; }

.tabrow {
    display: flex;
    height: 17px;
    padding-top: 1px;
}

.navs {
    display: flex;
    width: 72px;
    height: 14px;
    margin-left: 1px;
}

.nav {
    display: flex;
    align-items: center;
    justify-content: center;
    width: 18px;
    height: 14px;
    background-color: #c0c0c0;
    border: 1px solid;
    border-color: #fff #808080 #808080 #fff;
    outline: 1px solid #808080;
    outline-offset: -1px;
}

.bar {
    display: block;
    width: 2px;
    height: 9px;
    background-color: #000;
}

.tabs {
    width: 170px;
    height: 16px;
    margin-left: 5px;
    overflow: visible;
}

.tab {
    fill: none;
    stroke: #000;
}

.tab-on {
    fill: #000;
    stroke: #fff;
}

.tab-label {
    font-size: 12px;
    fill: #000;
}

.tab-label.on {
    fill: #fff;
    font-weight: bold;
}

.hscroll {
    display: flex;
    width: 321px;
    height: 14px;
    margin-left: 379px;
}

.hscroll .sb-btn { width: 15px; height: 14px; }
.hscroll .sb-thumb { height: 14px; }

.vgrip {
    flex: none;
    display: block;
    width: 5px;
    height: 14px;
    margin: 0 1px;
    border: 1px solid;
    border-color: #fff #808080 #808080 #fff;
}

/* command window */
.split {
    height: 8px;
    margin-top: -1px;
    border-top: 1px solid #000;
    box-shadow: inset 0 1px #fff;
}

.cmd {
    display: flex;
    flex-direction: column;
    height: 44px;
    margin: 1px 4px 0 3px;
}

.cmd pre {
    font-family: inherit;
    font-feature-settings: "hwid";
    line-height: 13px;
    padding: 0 2px;
}

.cmd-hist {
    display: flex;
    justify-content: space-between;
    height: 28px;
    background-color: #fff;
    border-left: 1px solid #808080;
    border-top: 1px solid #808080;
    border-bottom: 1px solid #808080;
}

.cmd-vs {
    display: flex;
    flex-direction: column;
    width: 16px;
    background-color: #c0c0c0;
}

.cmd-vs .sb-btn { width: 16px; height: 13px; }

.cmd-line {
    display: flex;
    justify-content: space-between;
    height: 16px;
    background-color: #fff;
    border-left: 1px solid #808080;
    margin-right: 17px;
    border-bottom: 1px solid #fff;
}

.cmd-line pre {
    line-height: 15px;
    padding-top: 1px;
}

.cmd-hs {
    display: flex;
    width: 62px;
    background-color: #c0c0c0;
}

.cmd-hs .sb-btn { width: 16px; height: 15px; }
.cmd-hs .sb-thumb { height: 15px; }

/* status bar */
.status {
    display: flex;
    height: 23px;
    margin-top: 6px;
    padding-left: 10px;
}

.coords {
    width: 328px;
    border: 1px solid;
    border-color: #808080 #fff #fff #808080;
    padding-left: 3px;
    font-size: 15px;
    line-height: 21px;
    word-spacing: 3px;
}

.st {
    display: block;
    margin-left: 2px;
    height: 23px;
    border: 1px solid;
    border-color: #fff #808080 #808080 #fff;
    font-size: 16px;
    line-height: 21px;
    text-align: center;
    white-space: nowrap;
    overflow: hidden;
}

.st.on {
    border-color: #000 #fff #fff #000;
}

.st-snap { width: 40px; margin-left: 3px; }
.st-grid { width: 47px; }
.st-ortho { width: 65px; }
.st-polar { width: 20px; }
.st-osnap { width: 53px; letter-spacing: 1px; }
.st-lwt { width: 29px; }
.st-model { width: 38px; }

.ime {
    display: flex;
    align-items: center;
    width: 159px;
    height: 22px;
    margin: -2px 0 0 176px;
    border: 1px solid;
    border-color: #fff #404040 #404040 #fff;
    outline: 1px solid #808080;
    outline-offset: -1px;
    color: #808080;
    padding: 0 1px;
}

.ime-led {
    flex: none;
    width: 10px;
    height: 20px;
    margin-right: 3px;
    background: repeating-conic-gradient(#808080 0 25%, #c0c0c0 0 50%) 0 0 / 4px 4px;
}

.ime-led i {
    display: block;
    width: 10px;
    height: 8px;
    background-color: #008000;
}

.ime-text {
    flex: none;
    width: 94px;
    font-size: 12px;
    word-spacing: 2px;
    white-space: nowrap;
    border-left: 1px solid #fff;
    padding-left: 4px;
}

.ime-text b {
    font-size: 9px;
    font-weight: normal;
    color: #000080;
}

.ime-ico {
    flex: none;
    width: 20px;
    height: 20px;
    margin-right: 1px;
    border-left: 1px solid #fff;
}

.ime-arrows {
    display: flex;
    flex: none;
    flex-direction: column;
    align-items: center;
    justify-content: space-around;
    width: 14px;
    height: 20px;
    border-left: 1px solid #fff;
}

.dash {
    display: block;
    width: 5px;
    height: 2px;
    background-color: #000;
}

/* task bar */
.taskbar {
    display: flex;
    align-items: center;
    height: 28px;
    margin-top: 1px;
    padding: 1px 2px 0;
    border-top: 1px solid #fff;
}

.start {
    display: flex;
    align-items: center;
    gap: 2px;
    width: 59px;
    height: 21px;
    margin-top: -2px;
    padding-left: 3px;
    border: 1px solid;
    border-color: #fff #000 #000 #fff;
    box-shadow: inset -1px -1px #808080;
    font-size: 14px;
}

.flag {
    width: 18px;
    height: 16px;
}

.taskbar .vgrip {
    height: 20px;
    width: 4px;
    margin: 0 2px 0 4px;
}

.quick {
    display: flex;
    gap: 5px;
    margin-left: 5px;
}

.quick svg {
    width: 18px;
    height: 18px;
}

.tsep {
    display: block;
    width: 2px;
    height: 22px;
    margin-left: 8px;
    border-left: 1px solid #808080;
    border-right: 1px solid #fff;
}

.task {
    display: flex;
    align-items: center;
    gap: 3px;
    width: 159px;
    height: 22px;
    margin: 0 4px 0 0;
    padding-left: 4px;
    border: 1px solid;
    border-color: #fff #000 #000 #fff;
    box-shadow: inset -1px -1px #808080;
    white-space: nowrap;
    overflow: hidden;
}

.task.active {
    border-color: #000 #fff #fff #000;
    box-shadow: inset 1px 1px #808080;
    background: repeating-conic-gradient(#fff 0 25%, #c0c0c0 0 50%) 0 0 / 2px 2px;
}

.task b {
    letter-spacing: 0.6px;
}

.task-name {
    font-family: "Liberation Sans", sans-serif;
}

.xl {
    width: 16px;
    height: 16px;
    flex: none;
}

.app-logo.small {
    flex: none;
}

.tray {
    display: flex;
    align-items: center;
    width: 133px;
    height: 22px;
    margin-left: auto;
    padding-left: 2px;
    border: 1px solid;
    border-color: #808080 #fff #fff #808080;
    box-shadow: -3px 0 0 -2px #808080;
    gap: 0;
}

.tray svg {
    width: 18px;
    height: 18px;
    margin-right: -1px;
}

.clock {
    margin-left: 7px;
    font-size: 12px;
    letter-spacing: -0.5px;
}

/* notes drawn over the window */
.note {
    position: absolute;
    height: 24px;
    padding-left: 4px;
    background-color: #fff;
    border: 2px solid #f00;
    font-size: 14px;
    font-weight: bold;
    letter-spacing: 2px;
    line-height: 20px;
    white-space: nowrap;
    overflow: hidden;
}

.note-1 { left: 3px; top: 266px; width: 211px; letter-spacing: 3px; }
.note-2 { left: 367px; top: 244px; width: 120px; letter-spacing: 0; padding-left: 6px; }
.note-3 { left: 600px; top: 231px; width: 204px; letter-spacing: 2.5px; padding-left: 6px; }
.note-5 { left: 633px; top: 549px; width: 212px; letter-spacing: 1.4px; padding-left: 6px; }

.redbox {
    position: absolute;
    left: 23px;
    top: 378px;
    width: 36px;
    height: 36px;
    border: 2px solid #f00;
}

.arrows {
    position: absolute;
    left: 0;
    top: 0;
    width: 1023px;
    height: 767px;
    pointer-events: none;
}

.wedge-fill {
    fill: #fff;
}

.redline {
    fill: none;
    stroke: #f00;
    stroke-width: 2;
}
```
